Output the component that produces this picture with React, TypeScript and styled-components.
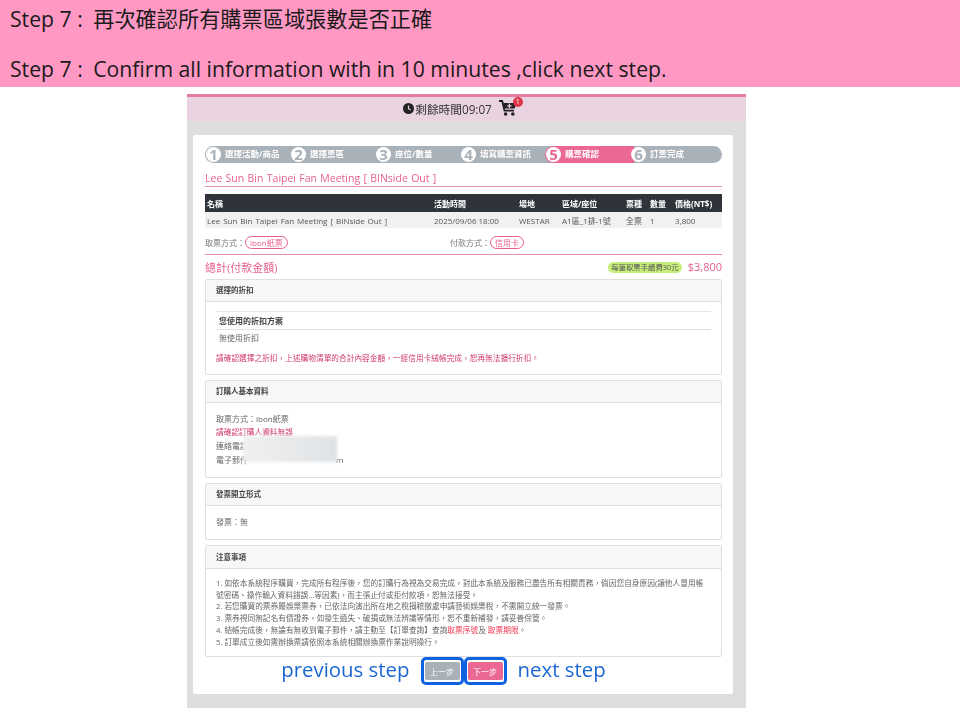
import styled, { createGlobalStyle } from 'styled-components';

const GlobalStyle = createGlobalStyle`
  html, body {
    margin: 0;
    padding: 0;
    background: #fff;
  }
  body {
    width: 960px;
    height: 720px;
    overflow: hidden;
    font-family: "Open Sans", "Noto Sans CJK TC", sans-serif;
  }
`;

const sans = `"Open Sans", "Noto Sans CJK TC", sans-serif`;

const Banner = styled.header`
  height: 87px;
  background: #ff99c3;
  padding: 0 0 0 10px;
  box-sizing: border-box;
  color: #1a1a1a;
  font-size: 21.2px;
`;

const BannerLine = styled.div<{ $gap?: number }>`
  height: 29px;
  line-height: 29px;
  padding-top: ${(p) => p.$gap ?? 4}px;
  white-space: nowrap;
`;

const StepTag = styled.span`
  margin-right: 5px;
`;

const Page = styled.main`
  position: relative;
  width: 559px;
  height: 614px;
  margin: 7px 0 0 187px;
  background: #dedede;
  filter: blur(0.35px);
`;

const TopBar = styled.div`
  height: 22px;
  padding: 0 13px 2px 0;
  border-top: 3px solid #e27ca0;
  background: #e9d3e0;
  display: flex;
  align-items: center;
  justify-content: center;
  font-size: 11.7px;
  color: #333;
  gap: 7px;
`;

const Timer = styled.span`
  display: flex;
  align-items: center;
  gap: 1px;
`;

const CartWrap = styled.span`
  position: relative;
  display: block;
  width: 18px;
  height: 16px;
  margin-bottom: 1px;
`;

const CartBadge = styled.span`
  position: absolute;
  top: -3px;
  right: -6px;
  width: 10px;
  height: 10px;
  border-radius: 50%;
  background: #dc3545;
  color: #fff;
  font-size: 7px;
  line-height: 10px;
  text-align: center;
`;

const Card = styled.section`
  position: absolute;
  top: 41px;
  left: 6px;
  width: 540px;
  height: 559px;
  box-sizing: border-box;
  padding: 11px 11px 0 12px;
  background: #fff;
  border-radius: 2px;
  font-size: 8px;
  color: #666;
`;

const Steps = styled.div`
  display: flex;
  height: 17px;
  border-radius: 9px;
  background: #a9b1b9;
`;

const Step = styled.div<{ $active?: boolean; $last?: boolean }>`
  flex: ${(p) => (p.$last ? '1' : p.$active ? '0 0 89px' : '0 0 85px')};
  margin-right: ${(p) => (p.$active ? '-4px' : '0')};
  display: flex;
  align-items: center;
  gap: 4px;
  padding-left: 1px;
  box-sizing: border-box;
  border-radius: 9px 0 0 9px;
  background: ${(p) => (p.$active ? '#ea6892' : 'transparent')};
  color: #fff;
  font-size: 8.5px;
  font-weight: 700;
  line-height: 14px;
  white-space: nowrap;
`;

const StepLabel = styled.span`
  position: relative;
  top: -1px;
`;

const StepNum = styled.span<{ $active?: boolean }>`
  position: relative;
  flex: none;
  width: 15px;
  height: 15px;
  border-radius: 50%;
  background: #fff;
  color: ${(p) => (p.$active ? '#ea6892' : '#a9b1b9')};
  font-size: 15px;
  font-weight: 700;
  line-height: 15px;
  text-align: center;
`;

const EventTitle = styled.h2`
  margin: 0;
  height: 24px;
  box-sizing: border-box;
  padding-top: 8px;
  border-bottom: 1px solid #e58fae;
  color: #e8618c;
  font-size: 10.5px;
  font-weight: 400;
  line-height: 14px;
  word-spacing: 0.6px;
  white-space: nowrap;
`;

const OrderTable = styled.div`
  margin-top: 7px;
`;

const columns = '227px 85px 43px 64px 24px 25px 1fr';

const TableHead = styled.div`
  display: grid;
  grid-template-columns: ${columns};
  height: 18px;
  padding-left: 2px;
  align-items: center;
  background: #2f343b;
  color: #fff;
  font-size: 8px;
  font-weight: 700;
`;

const TableRow = styled.div`
  display: grid;
  grid-template-columns: ${columns};
  height: 16px;
  padding-left: 2px;
  align-items: center;
  background: #f1f1f1;
  color: #555;
  font-size: 8px;
  white-space: nowrap;
`;

const EventName = styled.span`
  word-spacing: 0.9px;
`;

const PayRow = styled.div`
  display: grid;
  grid-template-columns: 245px 1fr;
  height: 27px;
  box-sizing: border-box;
  padding-top: 3px;
  align-items: center;
  border-bottom: 1px solid #e58fae;
  color: #777;
  font-size: 8px;
`;

const PayItem = styled.div`
  display: flex;
  align-items: center;
`;

const Pill = styled.span`
  display: inline-block;
  height: 13px;
  line-height: 11px;
  box-sizing: border-box;
  padding: 0 4px;
  border: 1px solid #e8618c;
  border-radius: 7px;
  color: #e8618c;
`;

const TotalRow = styled.div`
  display: flex;
  align-items: center;
  height: 24px;
  padding-bottom: 1px;
  box-sizing: border-box;
  color: #e8618c;
`;

const TotalLabel = styled.span`
  flex: 1;
  font-size: 11px;
`;

const FeeTag = styled.span`
  height: 11px;
  line-height: 11px;
  padding: 0 3px;
  margin: 2px 6px 0 0;
  border-radius: 6px;
  background: #c5ee7a;
  color: #555;
  font-size: 7.4px;
`;

const TotalAmount = styled.span`
  font-size: 11px;
`;

const Panel = styled.div<{ $h: number; $gap?: number }>`
  box-sizing: border-box;
  height: ${(p) => p.$h}px;
  margin-bottom: ${(p) => p.$gap ?? 5}px;
  border: 1px solid #dfdfdf;
  border-radius: 2px;
`;

const PanelHead = styled.div<{ $h?: number }>`
  height: ${(p) => p.$h ?? 21}px;
  line-height: ${(p) => p.$h ?? 21}px;
  padding-left: 10px;
  background: #f7f7f7;
  border-bottom: 1px solid #dfdfdf;
  color: #444;
  font-size: 7.5px;
  font-weight: 700;
`;

const PanelBody = styled.div`
  padding: 9px 10px 0;
  line-height: 13px;
`;

const DiscountTable = styled.div`
  border-top: 1px solid #e5e5e5;
  margin-bottom: 6px;
`;

const DiscountHead = styled.div`
  height: 17px;
  line-height: 17px;
  padding-left: 3px;
  border-bottom: 1px solid #e0e0e0;
  color: #444;
  font-size: 8px;
  font-weight: 700;
`;

const DiscountCell = styled.div`
  height: 16px;
  line-height: 16px;
  padding-left: 3px;
`;

const Warn = styled.div`
  color: #d13a6a;
  font-size: 7.7px;
  white-space: nowrap;
`;

const Plain = styled.div`
  height: 14px;
  line-height: 14px;
  white-space: nowrap;
`;

const Redacted = styled.div`
  position: absolute;
  top: 301px;
  left: 50px;
  width: 94px;
  height: 26px;
  background: linear-gradient(90deg, #eef0f2, #e6e8ea 60%, #dfe2e5);
  filter: blur(1.5px);
`;

const Notes = styled.ol`
  margin: 0;
  padding: 0;
  list-style: none;
  font-size: 7.7px;
  line-height: 11.7px;
  color: #666;
`;

const Hot = styled.span`
  color: #f0314f;
`;

const Actions = styled.div`
  display: flex;
  justify-content: center;
  align-items: center;
  height: 28px;
`;

const Hint = styled.span<{ $side: 'left' | 'right' }>`
  width: 150px;
  text-align: ${(p) => (p.$side === 'left' ? 'right' : 'left')};
  padding: ${(p) => (p.$side === 'left' ? '0 11px 4px 0' : '0 0 4px 11px')};
  box-sizing: border-box;
  color: #1b66d2;
  font-size: 20.4px;
  white-space: nowrap;
  font-family: ${sans};
`;

const Outline = styled.div`
  box-sizing: border-box;
  flex: none;
  width: 43px;
  height: 28px;
  padding: 2px 1px;
  border: 3px solid #0f62e0;
  border-radius: 5px;
  background: #fff;
`;

const ActionButton = styled.button<{ $primary?: boolean }>`
  display: block;
  width: 100%;
  height: 100%;
  padding: 0;
  border: 0;
  border-radius: 2px;
  background: ${(p) => (p.$primary ? '#ea6892' : '#a9b1b9')};
  color: #fff;
  font-family: ${sans};
  font-size: 8px;
`;

const stepLabels = ['選擇活動/商品', '選擇票區', '座位/數量', '填寫購票資訊', '購票確認', '訂票完成'];

function Clock() {
  return (
    <svg width="11" height="11" viewBox="0 0 10 10">
      <circle cx="5" cy="5" r="5" fill="#222" />
      <path d="M5 2.2V5.2L7 6.4" stroke="#e9d3e0" strokeWidth="1.1" fill="none" />
    </svg>
  );
}

function Cart() {
  return (
    <svg width="18" height="16" viewBox="0 0 18 16">
      <path d="M0 1H3.2L5.5 10.6H15" stroke="#222" strokeWidth="1.8" fill="none" />
      <path d="M4 3H17.6L15.8 8.6H5.2Z" fill="#222" />
      <path d="M10.4 3.6V8M8.2 5.8H12.6" stroke="#e9d3e0" strokeWidth="1.2" />
      <circle cx="6.6" cy="14" r="1.8" fill="#222" />
      <circle cx="13.8" cy="14" r="1.8" fill="#222" />
    </svg>
  );
}

function App() {
  return (
    <>
      <GlobalStyle />
      <Banner>
        <BannerLine><StepTag>Step 7 :</StepTag> 再次確認所有購票區域張數是否正確</BannerLine>
        <BannerLine $gap={21}><StepTag>Step 7 :</StepTag> Confirm all information with in 10 minutes ,click next step.</BannerLine>
      </Banner>
      <Page>
        <TopBar>
          <Timer>
            <Clock />
            剩餘時間09:07
          </Timer>
          <CartWrap>
            <Cart />
            <CartBadge>1</CartBadge>
          </CartWrap>
        </TopBar>
        <Card>
          <Steps>
            {stepLabels.map((label, i) => (
              <Step key={label} $active={i === 4} $last={i === 5}>
                <StepNum $active={i === 4}>{i + 1}</StepNum>
                <StepLabel>{label}</StepLabel>
              </Step>
            ))}
          </Steps>
          <EventTitle>Lee Sun Bin Taipei Fan Meeting [ BINside Out ]</EventTitle>
          <OrderTable>
            <TableHead>
              <span>名稱</span>
              <span>活動時間</span>
              <span>場地</span>
              <span>區域/座位</span>
              <span>票種</span>
              <span>數量</span>
              <span>價格(NT$)</span>
            </TableHead>
            <TableRow>
              <EventName>Lee Sun Bin Taipei Fan Meeting [ BINside Out ]</EventName>
              <span>2025/09/06 18:00</span>
              <span>WESTAR</span>
              <span>A1區_1排-1號</span>
              <span>全票</span>
              <span>1</span>
              <span>3,800</span>
            </TableRow>
          </OrderTable>
          <PayRow>
            <PayItem>
              取票方式：<Pill>ibon紙票</Pill>
            </PayItem>
            <PayItem>
              付款方式：<Pill>信用卡</Pill>
            </PayItem>
          </PayRow>
          <TotalRow>
            <TotalLabel>總計(付款金額)</TotalLabel>
            <FeeTag>每筆取票手續費30元</FeeTag>
            <TotalAmount>$3,800</TotalAmount>
          </TotalRow>
          <Panel $h={96}>
            <PanelHead>選擇的折扣</PanelHead>
            <PanelBody>
              <DiscountTable>
                <DiscountHead>您使用的折扣方案</DiscountHead>
                <DiscountCell>無使用折扣</DiscountCell>
              </DiscountTable>
              <Warn>請確認選擇之折扣，上述購物清單的合計內容金額，一經信用卡絨帳完成，恕再無法擴行折扣。</Warn>
            </PanelBody>
          </Panel>
          <Panel $h={98}>
            <PanelHead>訂購人基本資料</PanelHead>
            <PanelBody>
              <Plain>取票方式：ibon紙票</Plain>
              <Warn>請確認訂購人資料無誤</Warn>
              <Plain>連絡電話</Plain>
              <Plain>電子郵件　　　　　　　　　　　m</Plain>
            </PanelBody>
          </Panel>
          <Panel $h={57}>
            <PanelHead>發票開立形式</PanelHead>
            <PanelBody>發票：無</PanelBody>
          </Panel>
          <Panel $h={112} $gap={0}>
            <PanelHead $h={22}>注意事項</PanelHead>
            <PanelBody>
              <Notes>
                <li>1. 如依本系統程序購買，完成所有程序後，您的訂購行為視為交易完成，對此本系統及服務已盡告所有相關責務，倘因您自身原因(讓他人冒用帳</li>
                <li>號密碼、操作輸入資料錯誤...等因素)，而主張止付或拒付款項，恕無法接受。</li>
                <li>2. 若您購買的票券屬娛樂票券，已依法向演出所在地之稅捐稽徵處申請藝術娛樂稅，不需開立統一發票。</li>
                <li>3. 票券視同無記名有價證券，如發生遺失、破損或無法辨識等情形，恕不重新補發，請妥善保管。</li>
                <li>
                  4. 結帳完成後，無論有無收到電子郵件，請主動至【訂單查詢】查詢<Hot>取票序號</Hot>及 <Hot>取票期限</Hot>。
                </li>
                <li>5. 訂單成立後如需辦換票請依照本系統相關辦換票作業說明操行。</li>
              </Notes>
            </PanelBody>
          </Panel>
          <Actions>
            <Hint $side="left">previous step</Hint>
            <Outline>
              <ActionButton>上一步</ActionButton>
            </Outline>
            <Outline>
              <ActionButton $primary>下一步</ActionButton>
            </Outline>
            <Hint $side="right">next step</Hint>
          </Actions>
          <Redacted />
        </Card>
      </Page>
    </>
  );
}

export default App;
